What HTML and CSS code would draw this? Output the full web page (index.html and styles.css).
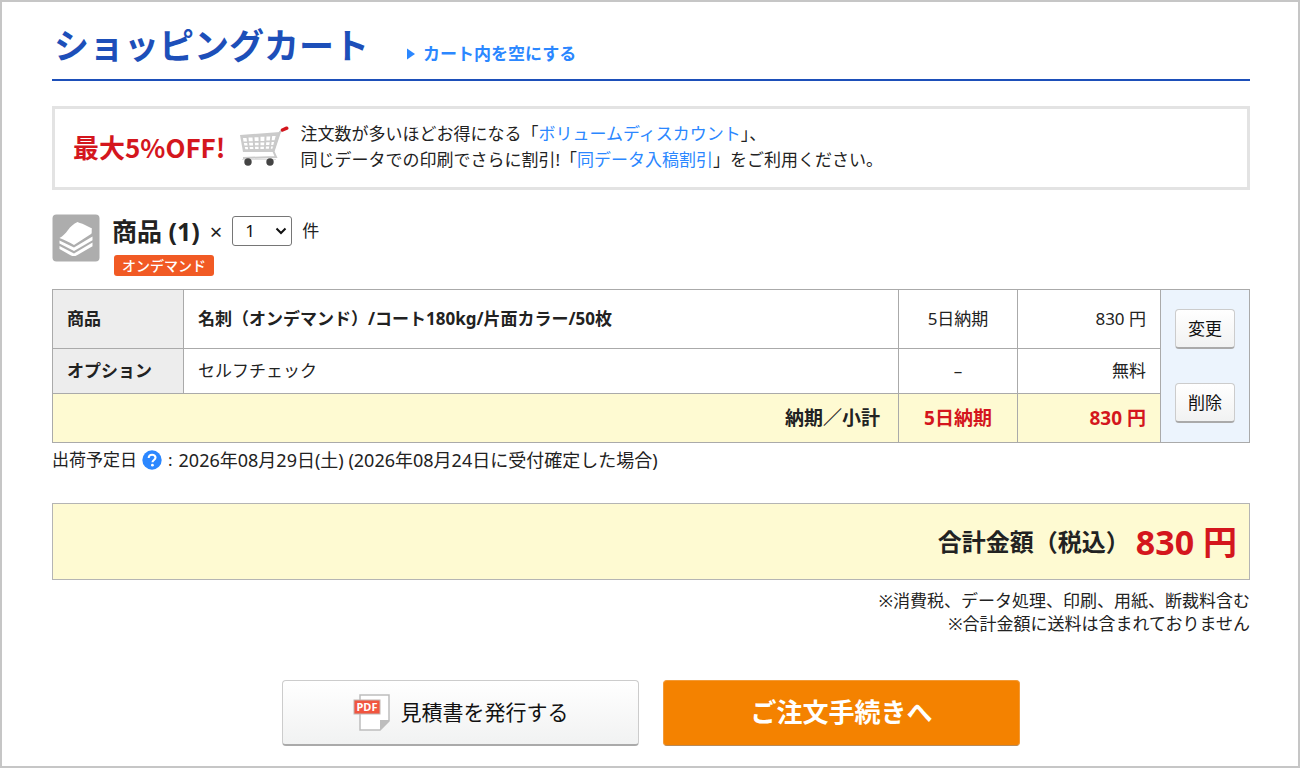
FILE: index.html
```html
<!DOCTYPE html>
<html lang="ja">
<head>
<meta charset="utf-8">
<title>ショッピングカート</title>
<meta name="viewport" content="width=device-width, initial-scale=1">
<link rel="stylesheet" href="styles.css">
</head>
<body>
<main class="page">
  <header class="page-head">
    <h1 class="title">ショッピングカート</h1>
    <a class="empty-link" href="#">
      <svg class="arrow" viewBox="0 0 8 12" aria-hidden="true"><path d="M0 0.5 8 6 0 11.5z" fill="#2b87ff"/></svg>
      カート内を空にする</a>
  </header>

  <section class="promo">
    <strong class="promo-lead">最大5%OFF!</strong>
    <svg class="cart" viewBox="0 0 50 42" aria-hidden="true">
      <path d="M1 9 41 6 35 26 4 26z" fill="#cbcbcb"/>
      <g stroke="#c9c9c9" fill="none">
        <path d="M47 2 41 6 34.500 25.500 37 31 4 32" stroke-width="2"/>
        <path d="M3 33.500h34" stroke="#e0e0e0"/>
      </g>
      <g fill="#fff">
        <path d="M4 12h3.500l.5 3.500H4.500zM9.500 11.600h4l.3 3.700h-4zM15.500 11.200h4l.1 3.900h-3.900zM21.500 10.800h4l-.2 4.100h-3.800zM27.500 10.400h3.800l-.5 4.200h-3.500zM33.200 10h3.500l-1.200 4.200H32.700z"/>
        <path d="M4.900 17h3.300l.4 2.500H5.400zM10 16.800h3.900l.2 2.600h-3.700zM15.800 16.700h3.800v2.600H16zM21.500 16.500h3.800l-.2 2.700h-3.600zM27.200 16.300h3.500l-.4 2.800H27zM32.600 16.100h2.500l-.8 2.900h-2.100z"/>
        <path d="M5.800 21h3l.3 2.200H6.300zM10.600 20.900h3.600l.2 2.200h-3.500zM16 20.800h3.600V23h-3.500zM21.400 20.700H25l-.2 2.200h-3.400zM26.900 20.600h3.300l-.3 2.200h-3.100zM32 20.500h2l-.7 2.200h-1.500z"/>
      </g>
      <path d="m43.500 4 4.200-1.800" stroke="#d4161d" stroke-width="3.500" stroke-linecap="round"/>
      <circle cx="9" cy="36" r="3.700" fill="#444"/><circle cx="31" cy="36" r="3.700" fill="#444"/>
    </svg>
    <p class="promo-text">注文数が多いほどお得になる「<a href="#">ボリュームディスカウント</a>」、<br>同じデータでの印刷でさらに割引!「<a href="#">同データ入稿割引</a>」をご利用ください。</p>
  </section>

  <section class="item">
    <div class="item-head">
      <svg class="stack" viewBox="0 0 48 48" aria-hidden="true">
        <rect x="0.500" y="0.500" width="47" height="47" rx="4" fill="#adadad"/>
        <g fill="#fff">
          <path d="M25.500 8c2 1.300 4.500 1.200 6.500 2.400l8 4.200c-.8 1.700.3 3.600-.6 5.200L22 31C17.500 28 12.500 26 7.500 24c3.500-2 6-4.500 8.500-8 2.500-3.300 5.500-6.300 9.500-8z"/>
          <path d="M7.500 26.500 22 33.500 40.500 22.500v3.800L22 37 7.500 29.500z"/>
          <path d="M7.500 32 22 39.500 40.500 28.500v3.800L25 41.200c-2.300 1.300-4.500 1-6.500 0L7.500 35z"/>
        </g>
      </svg>
      <div class="item-info">
        <div class="item-line">
          <h2 class="item-title">商品 (1)</h2>
          <label class="times" for="qty">×</label>
          <span class="select-wrap">
            <select id="qty" class="qty"><option>1</option><option>2</option><option>3</option></select>
            <svg class="chevron" viewBox="0 0 12 8" aria-hidden="true"><path d="m1.500 1.500 4.500 4.500 4.500-4.500" fill="none" stroke="#111" stroke-width="2"/></svg>
          </span>
          <span class="unit">件</span>
        </div>
        <span class="badge">オンデマンド</span>
      </div>
    </div>

    <table class="detail">
      <colgroup><col class="c-label"><col><col class="c-term"><col class="c-price"><col class="c-action"></colgroup>
      <tbody>
        <tr class="row-item">
          <th scope="row">商品</th>
          <td class="name">名刺（オンデマンド）/コート180kg/片面カラー/50枚</td>
          <td class="term">5日納期</td>
          <td class="price">830 円</td>
          <td class="actions" rowspan="3">
            <div class="action-list">
              <button class="btn small" type="button">変更</button>
              <button class="btn small" type="button">削除</button>
            </div>
          </td>
        </tr>
        <tr class="row-option">
          <th scope="row">オプション</th>
          <td>セルフチェック</td>
          <td class="term">–</td>
          <td class="price">無料</td>
        </tr>
        <tr class="row-sub">
          <td class="sub-label" colspan="2">納期／小計</td>
          <td class="term">5日納期</td>
          <td class="price">830 円</td>
        </tr>
      </tbody>
    </table>

    <p class="ship">出荷予定日
      <button class="help" type="button" aria-label="出荷予定日について"><svg viewBox="0 0 20 20" aria-hidden="true"><circle cx="10" cy="10" r="9.700" fill="#2b87ff"/><path d="M6.700 8c0-2.100 1.400-3.300 3.400-3.300s3.400 1.100 3.400 2.900c0 2.400-3 2.400-3 4.700" fill="none" stroke="#fff" stroke-width="2.100"/><circle cx="10.400" cy="15.200" r="1.400" fill="#fff"/></svg></button><span class="colon">:</span><span class="date">2026年08月29日(土) (2026年08月24日に受付確定した場合)</span></p>
  </section>

  <section class="total">
    <span class="total-label">合計金額（税込）</span><strong class="total-price">830 円</strong>
  </section>
  <p class="notes">※消費税、データ処理、印刷、用紙、断裁料含む<br>※合計金額に送料は含まれておりません</p>

  <div class="buttons">
    <button class="btn large" type="button">
      <svg class="pdf" viewBox="0 0 38 38" aria-hidden="true">
        <path d="M7 2h29v26l-9 9H7z" fill="#fff" stroke="#bdbdbd" stroke-width="1.500"/>
        <path d="M36 27v1l-9 9.500V27z" fill="#bdbdbd"/>
        <rect x="1" y="7" width="26" height="14" fill="#f1553f" stroke="#bfb5b2"/>
        <text class="pdf-text" x="14" y="18" text-anchor="middle">PDF</text>
      </svg>
      見積書を発行する</button>
    <button class="btn order" type="button">ご注文手続きへ</button>
  </div>
</main>
</body>
</html>
```

FILE: styles.css
```css
* { box-sizing: border-box; }

body {
  margin: 0;
  color: #222;
  background: #fff;
  font-family: "Noto Sans", "Noto Sans CJK JP", sans-serif;
  font-size: 17px;
  line-height: 26px;
}

h1, h2, p { margin: 0; }
strong { font-weight: 700; }
a { color: #2b87ff; text-decoration: none; }
svg { display: block; flex: none; }
button, select { font: inherit; color: inherit; cursor: pointer; }

.page {
  min-height: 100vh;
  padding: 18px 48px 20px 50px;
  border: 2px solid #c6c6c6;
}

.page-head {
  display: flex;
  align-items: center;
  gap: 38px;
  padding-bottom: 7px;
  border-bottom: 2px solid #1d4fb9;
}
.title {
  padding-left: 2px;
  color: #1d4fb9;
  font-size: 35px;
  line-height: 52px;
}
.empty-link {
  display: flex;
  align-items: center;
  gap: 8px;
  padding-top: 16px;
  font-weight: 700;
}
.arrow { width: 8px; height: 12px; }

.promo {
  display: flex;
  align-items: center;
  gap: 14px;
  margin-top: 25px;
  padding: 12px 18px 14px;
  border: 3px solid #e3e3e3;
}
.promo-lead {
  color: #d4161d;
  font-family: "Noto Sans CJK JP", sans-serif;
  font-size: 26px;
}
.cart { width: 50px; height: 42px; }
.promo-text { margin-left: -3px; }

.item-head {
  display: flex;
  align-items: flex-start;
  gap: 12px;
  margin-top: 24px;
}
.stack { width: 48px; height: 48px; }
.item-line {
  display: flex;
  align-items: center;
  gap: 10px;
  height: 34px;
}
.item-title { font-size: 25px; }
.times { font-size: 22px; }
.select-wrap { display: grid; align-items: center; }
.qty, .chevron { grid-area: 1 / 1; }
.qty {
  width: 60px;
  height: 30px;
  padding: 0 12px;
  border: 1px solid #767676;
  border-radius: 3px;
  background: #fff;
  color: #111;
  appearance: none;
  line-height: 24px;
}
.chevron {
  width: 12px;
  height: 8px;
  margin-right: 5px;
  justify-self: end;
  pointer-events: none;
}
.badge {
  display: block;
  width: max-content;
  margin: 7px 0 0 2px;
  padding: 0 8px;
  border-radius: 3px;
  background: #f15a24;
  color: #fff;
  font-size: 14px;
  font-weight: 500;
  line-height: 21px;
}

.detail {
  width: 100%;
  margin-top: 13px;
  border-collapse: collapse;
  table-layout: fixed;
}
.c-label { width: 131px; }
.c-term { width: 119px; }
.c-price { width: 143px; }
.c-action { width: 89px; }
.detail th, .detail td {
  padding: 0 14px;
  border: 1px solid #aaa;
  text-align: left;
}
.detail th { background: #ededed; }
.row-item { height: 59px; }
.row-option { height: 45px; }
.row-sub { height: 49px; background: #fefad2; font-size: 19px; font-weight: 700; }
.name { font-weight: 700; }
.detail .term { text-align: center; }
.detail .price { text-align: right; }
.detail .sub-label { padding-right: 18px; text-align: right; }
.row-sub .term, .row-sub .price { color: #d4161d; }
.detail .actions { padding: 0; background: #ecf4fd; }
.action-list {
  display: flex;
  flex-direction: column;
  align-items: center;
  gap: 34px;
}

.btn {
  padding: 0;
  border: 1px solid #ccc;
  border-bottom: 2px solid #aaa;
  border-radius: 4px;
  background: linear-gradient(#fff, #f1f2f2);
  color: #111;
}
.small { width: 60px; height: 40px; }

.ship {
  display: flex;
  align-items: center;
  margin-top: 4px;
}
.help {
  margin-left: 5px;
  padding: 0;
  border: 0;
  background: none;
}
.help svg { width: 20px; height: 20px; }
.colon { padding: 0 6px; }
.date { font-size: 18px; }

.total {
  display: flex;
  justify-content: flex-end;
  align-items: center;
  gap: 6px;
  min-height: 77px;
  margin-top: 30px;
  padding: 0 12px;
  border: 1px solid #b4b4b4;
  background: #fefad2;
  font-weight: 700;
}
.total-label { font-size: 24px; }
.total-price { color: #d4161d; font-size: 34px; }
.notes {
  margin-top: 9px;
  line-height: 23px;
  text-align: right;
}

.buttons {
  display: flex;
  justify-content: center;
  gap: 24px;
  margin-top: 45px;
}
.large, .order { width: 357px; height: 66px; padding-bottom: 2px; }
.large {
  display: flex;
  align-items: center;
  justify-content: center;
  gap: 10px;
  font-size: 21px;
}
.pdf { width: 38px; height: 38px; }
.pdf-text { fill: #fff; font-size: 11px; font-weight: 700; }
.order {
  border: 1px solid #f39a36;
  border-bottom-color: #b98a58;
  background: #f48200;
  color: #fff;
  font-size: 26px;
  font-weight: 700;
}
```
